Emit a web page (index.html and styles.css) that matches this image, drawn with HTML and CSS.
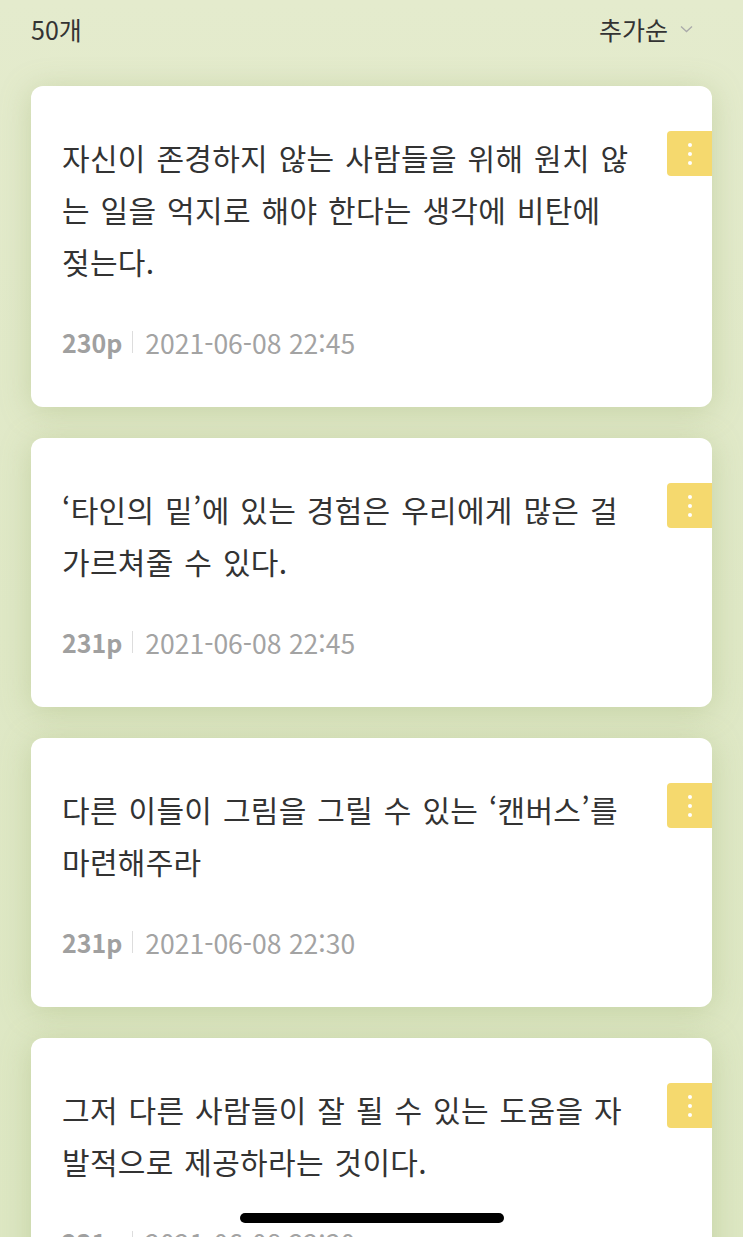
FILE: index.html
```html
<!DOCTYPE html>
<html lang="ko">
<head>
  <meta charset="UTF-8" />
  <meta name="viewport" content="width=device-width, initial-scale=1.0" />
  <title>밑줄</title>
  <link rel="stylesheet" href="styles.css">
</head>
<body>
  <div class="list-header">
    <span class="count">50개</span>
    <span class="sort">추가순
      <svg width="13" height="8" viewBox="0 0 13 8"><path d="M1 1.5 L6.5 6.5 L12 1.5" fill="none" stroke="#aaa" stroke-width="1.3"/></svg>
    </span>
  </div>

  <div class="cards">
    <div class="card">
      <p class="quote">자신이 존경하지 않는 사람들을 위해 원치 않는 일을 억지로 해야 한다는 생각에 비탄에 젖는다.</p>
      <div class="meta"><b>230p</b><span class="bar"></span>2021-06-08 22:45</div>
      <button class="more"><i></i><i></i><i></i></button>
    </div>
    <div class="card">
      <p class="quote">‘타인의 밑’에 있는 경험은 우리에게 많은 걸 가르쳐줄 수 있다.</p>
      <div class="meta"><b>231p</b><span class="bar"></span>2021-06-08 22:45</div>
      <button class="more"><i></i><i></i><i></i></button>
    </div>
    <div class="card">
      <p class="quote">다른 이들이 그림을 그릴 수 있는 ‘캔버스’를 마련해주라</p>
      <div class="meta"><b>231p</b><span class="bar"></span>2021-06-08 22:30</div>
      <button class="more"><i></i><i></i><i></i></button>
    </div>
    <div class="card">
      <p class="quote">그저 다른 사람들이 잘 될 수 있는 도움을 자발적으로 제공하라는 것이다.</p>
      <div class="meta"><b>231p</b><span class="bar"></span>2021-06-08 22:30</div>
      <button class="more"><i></i><i></i><i></i></button>
    </div>
  </div>

  <div class="home-indicator"></div>
</body>
</html>
```

FILE: styles.css
```css
* {
  box-sizing: border-box;
  margin: 0;
  padding: 0;
  font-family: "Noto Sans CJK KR", "Noto Sans", sans-serif;
}
html, body {
  height: 100%;
  overflow: hidden;
}
body {
  background: linear-gradient(180deg, #e4ebcd 0%, #dfe8c6 50%, #dde7c3 100%);
  width: 743px;
  height: 1237px;
}
.list-header {
  display: flex;
  justify-content: space-between;
  align-items: center;
  height: 58px;
  padding: 0 50px 0 31px;
  color: #333;
  font-size: 25px;
}
.sort {
  display: flex;
  align-items: center;
  gap: 12px;
}
.cards {
  display: flex;
  flex-direction: column;
  gap: 31px;
  padding: 28px 31px 0;
}
.card {
  position: relative;
  background: #fff;
  border-radius: 12px;
  padding: 45px 78px 50px 31px;
  box-shadow: 0 4px 30px rgba(150, 170, 100, 0.35);
}
.quote {
  font-size: 30px;
  line-height: 52px;
  letter-spacing: 0.3px;
  word-spacing: 2px;
  color: #333;
  word-break: break-all;
}
.meta {
  display: flex;
  align-items: center;
  margin-top: 40px;
  height: 30px;
  font-size: 26.5px;
  color: #a3a3a3;
}
.meta b {
  font-weight: 700;
  font-size: 25px;
  color: #a0a0a0;
}
.bar {
  width: 1px;
  height: 22px;
  background: #ddd;
  margin: 0 12px 0 10px;
}
.more {
  position: absolute;
  top: 45px;
  right: 0;
  width: 45px;
  height: 45px;
  border: none;
  border-radius: 4px 0 0 4px;
  background: #f5d96e;
  display: flex;
  flex-direction: column;
  align-items: center;
  justify-content: center;
  gap: 5px;
}
.more i {
  width: 4px;
  height: 4px;
  border-radius: 50%;
  background: #fff;
}
.home-indicator {
  position: fixed;
  left: 240px;
  top: 1213px;
  width: 264px;
  height: 10px;
  border-radius: 5px;
  background: #000;
}
```
